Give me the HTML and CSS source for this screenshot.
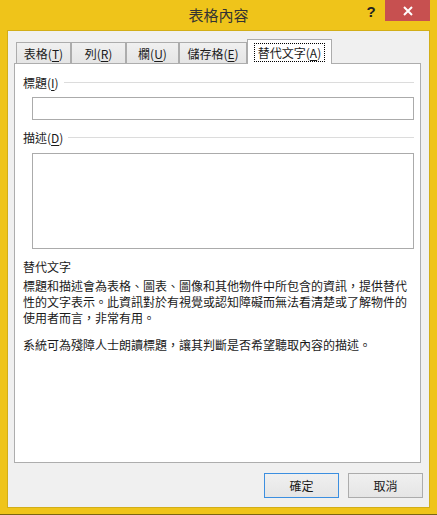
FILE: index.html
```html
<!DOCTYPE html>
<html lang="zh-Hant">
<head>
<meta charset="utf-8">
<title>表格內容</title>
<link rel="stylesheet" href="styles.css">
</head>
<body>
<div class="window">
  <div class="titlebar">
    <div class="title">表格內容</div>
    <div class="controls">
      <div class="help">?</div>
      <div class="close">
        <svg width="12" height="10" viewBox="0 0 12 10"><path d="M2 1 L10 9 M10 1 L2 9" stroke="#fff" stroke-width="2" fill="none"/></svg>
      </div>
    </div>
  </div>
  <div class="client">
    <div class="tabs">
      <div class="tab w1">表格(<u>T</u>)</div>
      <div class="tab w2">列(<u>R</u>)</div>
      <div class="tab w3">欄(<u>U</u>)</div>
      <div class="tab w4">儲存格(<u>E</u>)</div>
      <div class="tab active"><span class="focus">替代文字(<u>A</u>)</span></div>
    </div>
    <div class="panel">
      <div class="group-label"><span>標題(<u>I</u>)</span><div class="rule"></div></div>
      <div class="input"></div>
      <div class="group-label second"><span>描述(<u>D</u>)</span><div class="rule"></div></div>
      <div class="textarea"></div>
      <div class="alt-title">替代文字</div>
      <p class="para">標題和描述會為表格、圖表、圖像和其他物件中所包含的資訊，提供替代<br>性的文字表示。此資訊對於有視覺或認知障礙而無法看清楚或了解物件的<br>使用者而言，非常有用。</p>
      <p class="para para2">系統可為殘障人士朗讀標題，讓其判斷是否希望聽取內容的描述。</p>
    </div>
    <div class="buttons">
      <div class="btn default">確定</div>
      <div class="btn">取消</div>
    </div>
  </div>
</div>
</body>
</html>
```
FILE: styles.css
```css
* { box-sizing: border-box; }
html, body { margin: 0; padding: 0; }
body {
  font-family: "Noto Sans CJK TC", "Noto Sans", sans-serif;
  font-size: 12px;
  color: #1a1a1a;
  background: #ffffff;
}
.window {
  width: 437px;
  height: 515px;
  background: #efc41a;
  padding: 0 7px 7px 7px;
  border-bottom: 1px solid #7a6612;
}
.titlebar {
  height: 30px;
  display: grid;
  margin: 0 -7px;
}
.title {
  grid-area: 1 / 1;
  justify-self: center;
  align-self: start;
  font-size: 15px;
  line-height: 30px;
  color: #333333;
}
.controls {
  grid-area: 1 / 1;
  justify-self: end;
  align-self: start;
  display: flex;
  margin-right: 7px;
}
.help {
  width: 28px;
  height: 21px;
  text-align: center;
  font-family: "Liberation Sans", sans-serif;
  font-weight: bold;
  font-size: 15px;
  line-height: 24px;
  color: #222222;
}
.close {
  width: 45px;
  height: 21px;
  background: #c75050;
  display: flex;
  align-items: center;
  justify-content: center;
}
.client {
  height: 478px;
  border: 1px solid #d2ae18;
  background: #f0f0f0;
  padding-top: 8px;
}
.tabs {
  display: flex;
  align-items: flex-end;
  height: 24px;
  margin-left: 8px;
}
.tab {
  height: 21px;
  border: 1px solid #acacac;
  border-bottom: none;
  background: linear-gradient(#f0f0f0, #e5e5e5);
  text-align: center;
  line-height: 19px;
  padding-top: 1px;
  white-space: nowrap;
}
.w1 { width: 55px; }
.w2 { width: 55px; }
.w3 { width: 53px; }
.w4 { width: 68px; }
.tab.active {
  width: 85px;
  height: 25px;
  margin-bottom: -1px;
  background: #ffffff;
  position: relative;
  z-index: 1;
  padding-top: 3px;
  display: flex;
  justify-content: center;
  align-items: flex-start;
}
.focus {
  display: block;
  border: 1px dotted #000000;
  padding: 0 3px;
  line-height: 17px;
}
u { text-decoration: underline; text-underline-offset: 2px; }
.panel {
  width: 407px;
  height: 400px;
  margin-left: 6px;
  border: 1px solid #adadad;
  background: #ffffff;
  padding: 10px 6px 0 8px;
}
.group-label {
  display: flex;
  align-items: center;
  height: 17px;
  line-height: 17px;
}
.group-label.second { margin-top: 9px; }
.rule {
  flex: 1;
  height: 1px;
  background: #dcdcdc;
  margin-left: 5px;
}
.input {
  margin: 6px 0 0 9px;
  height: 23px;
  border: 1px solid #ababab;
  background: #ffffff;
}
.textarea {
  margin: 7px 0 0 9px;
  height: 96px;
  border: 1px solid #ababab;
  background: #ffffff;
}
.alt-title {
  margin-top: 9px;
  line-height: 17px;
}
.para {
  margin: 3px 0 0 0;
  line-height: 16px;
  white-space: nowrap;
}
.para2 { margin-top: 11px; }
.buttons {
  display: flex;
  justify-content: flex-end;
  gap: 9px;
  margin-top: 10px;
  padding-right: 6px;
}
.btn {
  width: 75px;
  height: 25px;
  border: 1px solid #acacac;
  background: linear-gradient(#f0f0f0, #e5e5e5);
  text-align: center;
  line-height: 23px;
}
.btn.default { border-color: #3c8fe0; }
```
